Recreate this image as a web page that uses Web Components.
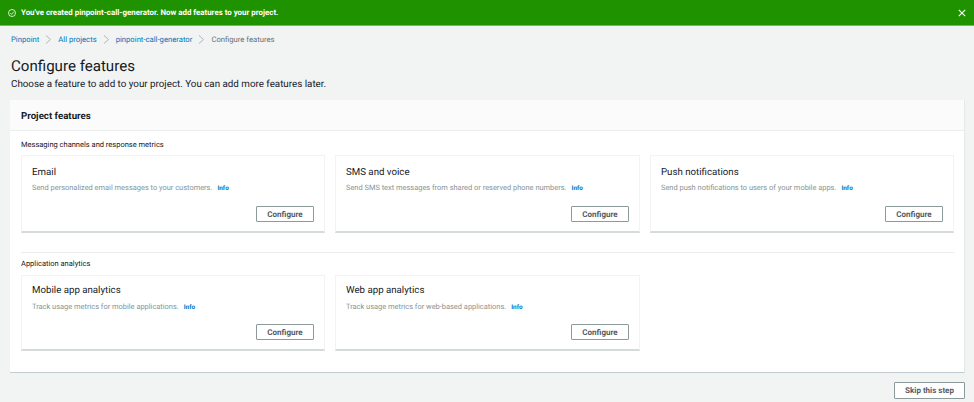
<!DOCTYPE html>
<html><head><meta charset="utf-8"><title>Configure features</title>
<style>
html,body{margin:0;padding:0;background:#f2f4f3;height:402px;overflow:hidden}
body{font-family:Roboto,"Noto Sans",sans-serif;color:#16191f;text-rendering:geometricPrecision}
</style></head><body>
<app-page>
<flash-bar>You've created pinpoint-call-generator. Now add features to your project.</flash-bar>
<bread-crumbs></bread-crumbs>
<page-head title-text="Configure features">Choose a feature to add to your project. You can add more features later.</page-head>
<feature-panel heading="Project features">
 <feature-group label="Messaging channels and response metrics">
  <feature-card name="Email">Send personalized email messages to your customers.</feature-card>
  <feature-card name="SMS and voice">Send SMS text messages from shared or reserved phone numbers.</feature-card>
  <feature-card name="Push notifications">Send push notifications to users of your mobile apps.</feature-card>
 </feature-group>
 <feature-group label="Application analytics" second>
  <feature-card name="Mobile app analytics">Track usage metrics for mobile applications.</feature-card>
  <feature-card name="Web app analytics">Track usage metrics for web-based applications.</feature-card>
 </feature-group>
</feature-panel>
<page-foot><aws-button wide>Skip this step</aws-button></page-foot>
</app-page>
<script>
function def(name, html, init){
  customElements.define(name, class extends HTMLElement{
    constructor(){super();this.attachShadow({mode:'open'}).innerHTML=html;}
    connectedCallback(){ if(init) init(this,this.shadowRoot); }
  });
}
const chev=`<svg width="7" height="9" viewBox="0 0 7 9" fill="none" stroke="#aab7b8"><path d="M1 .5 5.5 4.5 1 8.5"/></svg>`;
def('app-page',`<style>:host{display:block;width:974px}</style><slot></slot>`);
def('flash-bar',`<style>
:host{display:flex;align-items:center;box-sizing:border-box;height:26px;background:#1f9200;border-bottom:1px solid #7fae70;color:#fff;font-size:7.9px;font-weight:700;padding:0 8px 0 8px}
svg{display:block;flex:none}.t{flex:1;margin-left:5px;white-space:nowrap}
</style>
<svg width="8" height="8" viewBox="0 0 8 8" fill="none" stroke="#fff"><circle cx="4" cy="4" r="3.5" stroke-width=".8"/><path d="M2.3 4.1 3.6 5.4 5.8 2.7" stroke-width=".8"/></svg>
<span class="t"><slot></slot></span>
<svg width="8" height="8" viewBox="0 0 8 8" fill="none" stroke="#fff" stroke-width="1.2"><path d="M.8.8 7.2 7.2M7.2.8.8 7.2"/></svg>`);
def('bread-crumbs',`<style>
:host{display:flex;align-items:center;height:26px;padding:0 0 0 11px;font-size:7.7px;white-space:nowrap;color:#687078}
a{color:#0073bb;text-decoration:none}svg{display:block;margin:0 6px 0 6px}
</style>
<a href="#">Pinpoint</a>${chev}<a href="#">All projects</a>${chev}<a href="#">pinpoint-call-generator</a>${chev}<span>Configure features</span>`);
def('page-head',`<style>
:host{display:block;padding:4px 11px 0;height:48px;box-sizing:border-box}
h1{margin:0;font-size:15.1px;line-height:21px;font-weight:400;color:#16191f;white-space:nowrap}
p{margin:0;font-size:9.8px;line-height:15px;color:#16191f;white-space:nowrap}
</style><h1></h1><p><slot></slot></p>`,(h,s)=>{s.querySelector('h1').textContent=h.getAttribute('title-text')});
def('feature-panel',`<style>
:host{display:block;box-sizing:border-box;margin:0 10px;width:955px;height:273px;background:#fff;border-bottom:1px solid #c3ccd0;border-right:1px solid #e6e9ea}
header{height:31px;box-sizing:border-box;background:#fbfbfb;border-bottom:1px solid #eaeded;padding:2px 11px 0;display:flex;align-items:center;font-size:9.7px;font-weight:700;color:#16191f}
.b{padding:0 10px 0 11px}
</style><header></header><div class="b"><slot></slot></div>`,(h,s)=>{s.querySelector('header').textContent=h.getAttribute('heading')});
def('feature-group',`<style>
:host{display:block}
.l{font-size:7.5px;line-height:12px;padding-top:8px;height:24px;box-sizing:border-box;color:#16191f;white-space:nowrap}
.g{display:grid;grid-template-columns:304px 305px 304px;column-gap:10px}
:host([second]) .l{padding-top:5px;height:22px}
:host([second]) ::slotted(feature-card){height:76px;padding-top:9px;--pm:4px}
:host(:not([second])){border-bottom:1px solid #eaeded;padding-bottom:19px;margin-bottom:0}
</style><div class="l"></div><div class="g"><slot></slot></div>`,(h,s)=>{s.querySelector('.l').textContent=h.getAttribute('label')});
def('feature-card',`<style>
:host{display:flex;flex-direction:column;box-sizing:border-box;height:78px;background:#fff;border:1px solid #f2f4f4;border-bottom:2px solid #d5dbdb;padding:11px 10px 0 10px}
h3{margin:0;font-size:9.7px;line-height:12px;font-weight:400;color:#16191f;white-space:nowrap}
p{margin:var(--pm,3px) 0 0;font-size:7.45px;line-height:11px;color:#879596;white-space:nowrap}
a{color:#0073bb;text-decoration:none;font-weight:700;font-size:6.4px;margin-left:5px}
.a{margin-top:auto;padding-bottom:9px;display:flex;justify-content:flex-end}
</style><h3></h3><p><slot></slot><a href="#">Info</a></p><div class="a"><aws-button>Configure</aws-button></div>`,(h,s)=>{s.querySelector('h3').textContent=h.getAttribute('name')});
def('aws-button',`<style>
:host{display:inline-flex;align-items:center;justify-content:center;box-sizing:border-box;width:58px;height:16px;background:#fff;border:1px solid #8d9a9b;border-radius:1px;font-size:8px;font-weight:700;color:#545b64;white-space:nowrap}
:host([wide]){width:71px;height:17px}
</style><slot></slot>`);
def('page-foot',`<style>:host{display:flex;justify-content:flex-end;padding:9px 9px 0 0}</style><slot></slot>`);
</script>
</body></html>
